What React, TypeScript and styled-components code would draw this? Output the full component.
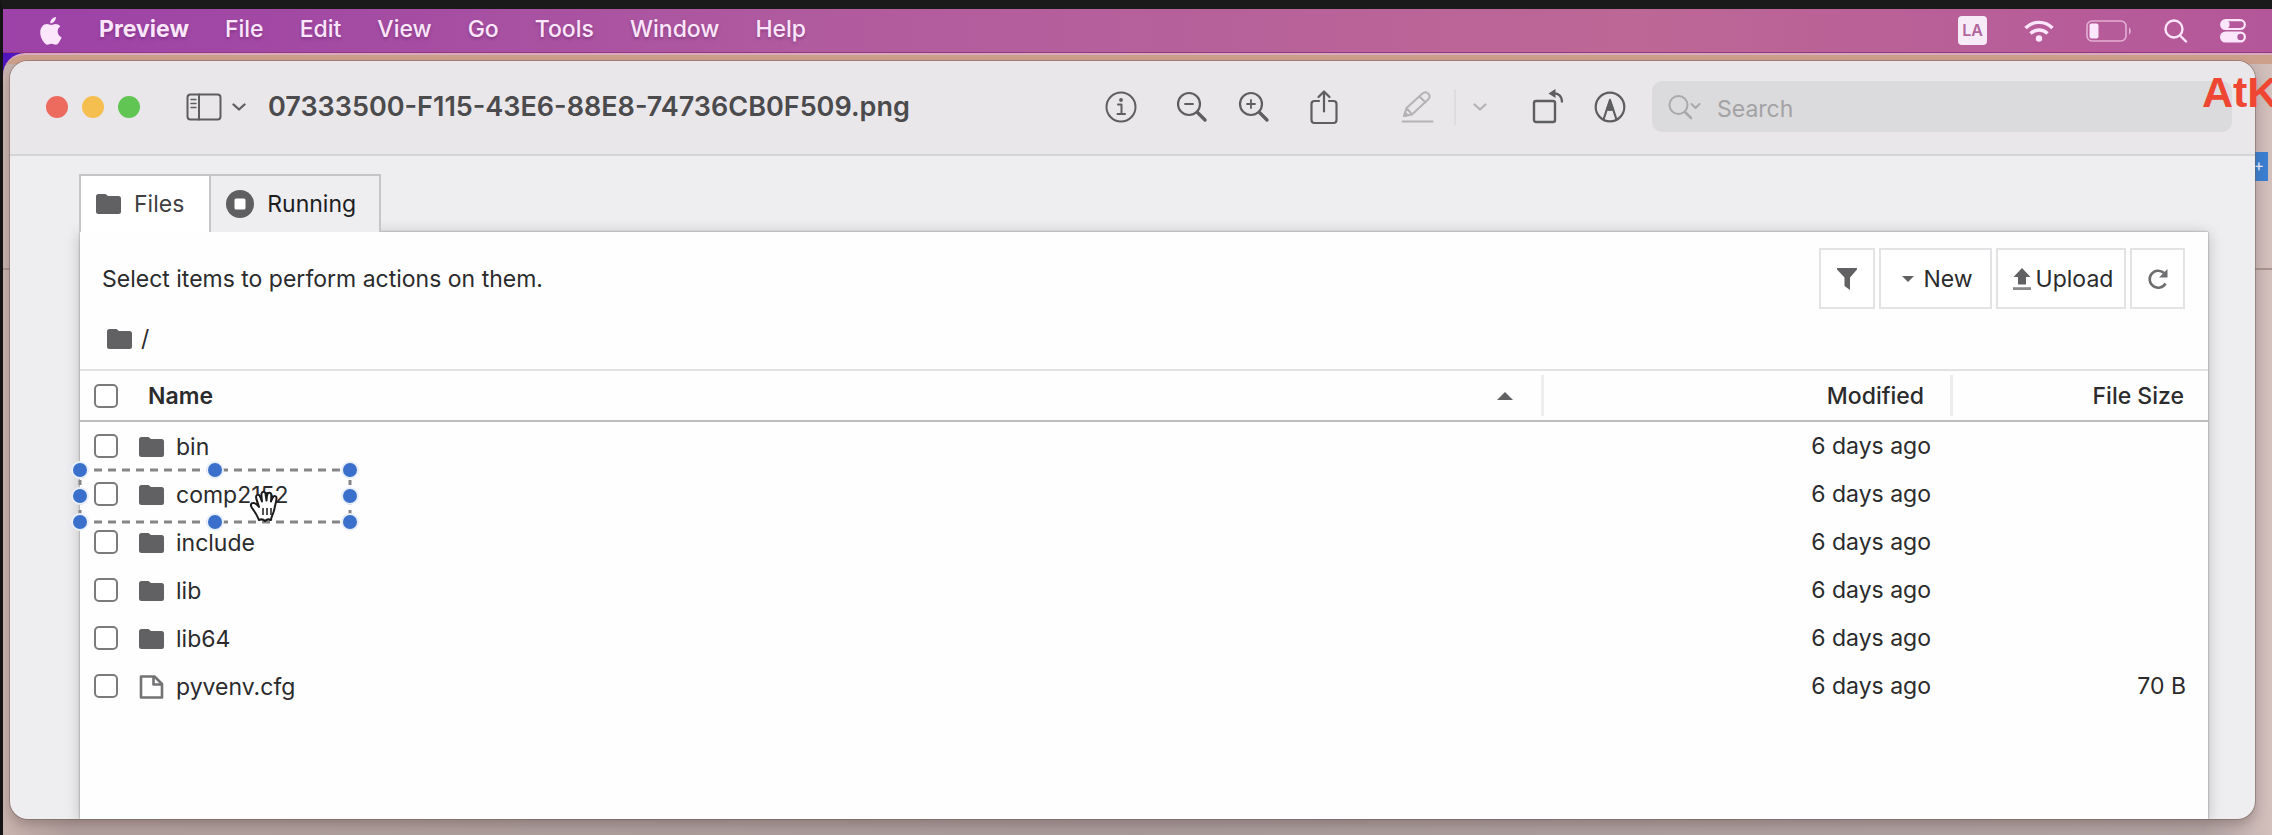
import React from "react";
import styled, { createGlobalStyle, css } from "styled-components";

const GlobalStyle = createGlobalStyle`
  *, *::before, *::after { box-sizing: border-box; }
  body {
    margin: 0;
    font-family: Inter, "Liberation Sans", sans-serif;
    font-size: 23px;
    line-height: 28px;
    color: #2b2b2d;
  }
  button, input { font: inherit; color: inherit; }
`;

const Screen = styled.div`
  min-height: 100vh;
  display: flex;
  flex-direction: column;
  border-top: 9px solid #1a1a1a;
  border-left: 3px solid #141416;
  background: linear-gradient(90deg, #4f14bd 0, #8a3a9c 400px, #b0667f 100%);
  overflow: hidden;
`;

/* ---------- menu bar ---------- */

const MenuBar = styled.header`
  height: 44px;
  display: flex;
  align-items: center;
  justify-content: space-between;
  padding: 0 26px 0 36px;
  border-bottom: 1px solid #93387f;
  background: linear-gradient(90deg, #9c42a8 0%, #a44ba3 16%, #b15b9f 36%, #bd6796 72%, #b4579a 100%);
  color: #fbe6fb;
`;

const MenuList = styled.nav`
  display: flex;
  align-items: center;
  gap: 36px;
`;

const MenuItem = styled.button<{ $strong?: boolean }>`
  border: 0;
  padding: 0 0 3px;
  background: none;
  line-height: 28px;
  font-weight: ${(p) => (p.$strong ? 700 : 500)};
  text-shadow: 0 2px 3px rgba(80, 20, 80, 0.35);
`;

const MenuIcon = styled(MenuItem)`
  display: flex;
  padding: 0;
`;

const StatusList = styled.div`
  display: flex;
  align-items: center;
  gap: 32px;
`;

const InputSource = styled.button`
  width: 29px;
  height: 29px;
  margin-right: 5px;
  border: 0;
  border-radius: 4px;
  padding: 0;
  background: #f7ebf8;
  color: #b0659c;
  font-size: 16px;
  font-weight: 600;
  line-height: 29px;
`;

/* ---------- windows ---------- */

const BackWindow = styled.div`
  position: relative;
  flex: 1;
  display: flex;
  padding: 6px 17px 16px 7px;
  border-top: 2px solid #d9a9bd;
  border-top-left-radius: 22px;
  background:
    linear-gradient(#a99491, #a99491) 0 213px / 100% 2px no-repeat,
    linear-gradient(#cda08c 0, #cda08c 9px, transparent 9px),
    linear-gradient(90deg, #c9b3ae 0, #b3a19e 3%, #aa9c9a 50%, #b3a4a2 97%, #d3c0bd 100%);
`;

const Window = styled.main`
  position: relative;
  flex: 1;
  min-width: 0;
  display: flex;
  flex-direction: column;
  border-radius: 18px;
  background: #eeeef0;
  box-shadow: 0 0 0 1px rgba(110, 90, 90, 0.45), 0 6px 12px rgba(70, 50, 50, 0.3);
  overflow: hidden;
`;

const TitleBar = styled.div`
  height: 95px;
  flex: none;
  display: flex;
  align-items: center;
  padding: 0 23px 2px 36px;
  border-bottom: 2px solid #d4d3d5;
  background: #e9e7ea;
  color: #58575a;
`;

const Lights = styled.div`
  display: flex;
  gap: 14px;
  margin-right: 46px;
`;

const Light = styled.button<{ $color: string }>`
  width: 22px;
  height: 22px;
  border: 0;
  border-radius: 50%;
  padding: 0;
  background: ${(p) => p.$color};
`;

const ToolButton = styled.button<{ $width?: number; $before?: number; $faded?: boolean }>`
  width: ${(p) => p.$width ?? 40}px;
  height: 40px;
  flex: none;
  display: flex;
  align-items: center;
  justify-content: center;
  margin-left: ${(p) => p.$before ?? 0}px;
  border: 0;
  padding: 0;
  background: none;
  color: ${(p) => (p.$faded ? "#b3b2b5" : "#5e5d60")};
`;

const Title = styled.h1`
  flex: 1;
  min-width: 0;
  margin: 0 0 0 22px;
  overflow: hidden;
  text-overflow: ellipsis;
  white-space: nowrap;
  font-size: 27px;
  font-weight: 600;
  line-height: 32px;
  color: #4b4a4d;
`;

const Divider = styled.span`
  width: 2px;
  height: 36px;
  margin-left: 16px;
  background: #dddcdf;
`;

const SearchBox = styled.label`
  width: 580px;
  height: 51px;
  display: flex;
  align-items: center;
  gap: 15px;
  margin-left: 22px;
  padding: 0 16px;
  border-radius: 10px;
  background: #dbdadc;
  color: #a9a8ab;
`;

const SearchInput = styled.input`
  flex: 1;
  min-width: 0;
  border: 0;
  padding: 4px 0 0;
  outline: 0;
  background: none;
  &::placeholder { color: #a3a2a5; opacity: 1; }
`;

const Canvas = styled.div`
  flex: 1;
  display: flex;
  flex-direction: column;
  padding: 18px 47px 0 70px;
`;

const TabList = styled.div`
  position: relative;
  z-index: 1;
  display: flex;
  margin-left: -1px;
`;

const Tab = styled.button<{ $active?: boolean }>`
  height: 58px;
  display: flex;
  align-items: center;
  gap: 13px;
  padding: 0 23px 0 15px;
  border: 2px solid #c6c6c8;
  border-bottom: 0;
  background: #eeeef0;
  color: #1d1d1f;
  ${(p) =>
    p.$active
      ? css`
          padding-right: 25px;
          border-right: 0;
          background: #fff;
          color: #404042;
        `
      : ""}
`;

const Panel = styled.section`
  flex: 1;
  background: #fefefe;
  box-shadow: 0 0 2px rgba(0, 0, 0, 0.4), 0 2px 14px rgba(0, 0, 0, 0.22);
`;

/* ---------- file browser ---------- */

const ActionBar = styled.div`
  display: flex;
  align-items: center;
  gap: 4px;
  padding: 16px 23px 0 22px;
`;

const Hint = styled.p`
  flex: 1;
  margin: 0;
`;

const ActionButton = styled.button<{ $width: number; $gap?: number }>`
  width: ${(p) => p.$width}px;
  height: 61px;
  display: flex;
  align-items: center;
  justify-content: center;
  gap: ${(p) => p.$gap ?? 0}px;
  border: 2px solid #e3e3e5;
  padding: 0 0 0 ${(p) => (p.$gap ? 4 : 0)}px;
  background: #fff;
`;

const Crumbs = styled.nav`
  height: 60px;
  display: flex;
  align-items: center;
  gap: 9px;
  padding: 0 27px;
`;

const CrumbLink = styled.a`
  display: flex;
  color: inherit;
  text-decoration: none;
`;

const FileTable = styled.table`
  width: 100%;
  table-layout: fixed;
  border-collapse: separate;
  border-spacing: 0;
`;

const CheckCol = styled.col` width: 52px; `;
const ModifiedCol = styled.col` width: 409px; `;
const SizeCol = styled.col` width: 258px; `;

const HeadCell = styled.th<{ $weight?: number }>`
  padding: 4px 0;
  border-top: 2px solid #e2e2e4;
  border-bottom: 2px solid #bdbdbf;
  text-align: left;
  font-weight: ${(p) => p.$weight ?? 500};
`;

const HeadInner = styled.div<{ $split?: boolean; $align?: string; $right?: number }>`
  height: 41px;
  display: flex;
  align-items: center;
  justify-content: ${(p) => p.$align ?? "space-between"};
  border-left: ${(p) => (p.$split ? "3px solid #ededf0" : "0")};
  padding: 0 ${(p) => p.$right ?? 0}px 0 16px;
`;

const CheckHead = styled(HeadInner)`
  padding: 0 0 0 14px;
`;

const Row = styled.tr`
  height: 48px;
`;

const Cell = styled.td<{ $right?: number }>`
  position: relative;
  padding: 0 ${(p) => p.$right ?? 0}px 0 0;
  text-align: ${(p) => (p.$right ? "right" : "left")};
`;

const CheckCell = styled(Cell)`
  padding-left: 14px;
`;

const Check = styled.input`
  appearance: none;
  display: block;
  width: 24px;
  height: 24px;
  margin: 0;
  border: 2px solid #7b7b7d;
  border-radius: 5px;
  background: #fff;
`;

const FileLink = styled.a`
  display: inline-flex;
  align-items: center;
  gap: 12px;
  padding-left: 7px;
  color: inherit;
  text-decoration: none;
  vertical-align: middle;
`;

/* ---------- overlays ---------- */

const Selection = styled.svg`
  position: absolute;
  z-index: 2;
  left: -10px;
  top: -10px;
  overflow: visible;
  pointer-events: none;
`;

const Watermark = styled.div`
  position: absolute;
  z-index: 3;
  top: 16px;
  left: calc(100% - 70px);
  color: #ee4632;
  font: 700 43px/43px "Liberation Sans", Arial, sans-serif;
`;

const AddBadge = styled.div`
  position: absolute;
  top: 97px;
  right: 4px;
  width: 20px;
  height: 29px;
  padding-right: 4px;
  background: #3a7fd2;
  color: #e9f3ff;
  font-size: 16px;
  line-height: 27px;
  text-align: right;
`;

/* ---------- icons ---------- */

const stroke = { fill: "none", stroke: "currentColor", strokeLinecap: "round", strokeLinejoin: "round" } as const;

const AppleIcon = () => (
  <svg width="24" height="28" viewBox="0 0 24 28" fill="currentColor" aria-hidden="true">
    <path d="M16.900 0c.2 3.300-2.500 6.400-5.600 6.300C11 3.300 13.800.3 16.900 0zM22.700 20.300c-.9 2.100-1.400 3-2.500 4.600-.9 1.400-2 2.800-3.600 2.800-1.500 0-2-.9-4.100-.9s-2.600.9-4.100.9c-1.600 0-2.700-1.300-3.700-2.700C.7 19.900.1 12.700 3.200 9.500c1.300-1.600 3-2.400 4.700-2.400 1.800 0 3 1 4.400 1 1.300 0 2.300-1 4.400-1 1.500 0 3.300.8 4.600 2.300-4 2.300-3.300 8.900 1.400 10.900z" />
  </svg>
);

const WifiIcon = () => (
  <svg width="30" height="22" viewBox="0 0 30 22" {...stroke} strokeWidth="3.400" strokeLinecap="butt" aria-hidden="true">
    <path d="M1.500 8a19 19 0 0 1 27 0M6.500 13.500a12 12 0 0 1 17 0" />
    <circle cx="15" cy="18.500" r="3.200" fill="currentColor" stroke="none" />
  </svg>
);

const BatteryIcon = () => (
  <svg width="46" height="22" viewBox="0 0 46 22" aria-hidden="true">
    <rect x="1" y="1" width="39" height="20" rx="5" fill="none" stroke="#e3b0d4" strokeWidth="1.600" />
    <rect x="3.500" y="3.500" width="9" height="15" rx="2" fill="currentColor" />
    <path d="M43 7.500c2.400 1.200 2.400 5.800 0 7z" fill="#e3b0d4" />
  </svg>
);

const SpotlightIcon = () => (
  <svg width="24" height="24" viewBox="0 0 24 24" {...stroke} strokeWidth="2.400" aria-hidden="true">
    <circle cx="10" cy="10" r="8.500" />
    <path d="M16 16.500l6 6" />
  </svg>
);

const ControlIcon = () => (
  <svg width="26" height="24" viewBox="0 0 26 24" aria-hidden="true">
    <rect x="1.200" y="1.200" width="23.600" height="8.800" rx="4.400" fill="none" stroke="currentColor" strokeWidth="2.200" />
    <circle cx="5.600" cy="5.600" r="4" fill="currentColor" />
    <rect x="0" y="12.500" width="26" height="11" rx="5.500" fill="currentColor" />
    <circle cx="20.500" cy="18" r="3.200" fill="#b0589c" />
  </svg>
);

const SidebarIcon = () => (
  <svg width="36" height="28" viewBox="0 0 36 28" {...stroke} strokeWidth="2" aria-hidden="true">
    <rect x="1.500" y="1.500" width="33" height="25" rx="3" />
    <path d="M13 1.500v25" />
    <path d="M5 6.500h5M5 10.500h5M5 14.500h5" strokeWidth="1.400" />
  </svg>
);

const ChevronIcon = () => (
  <svg width="14" height="10" viewBox="0 0 14 10" {...stroke} strokeWidth="2.300" aria-hidden="true">
    <path d="M1.500 2.500l5.500 5 5.500-5" />
  </svg>
);

const InfoIcon = () => (
  <svg width="32" height="32" viewBox="0 0 32 32" {...stroke} strokeWidth="2" aria-hidden="true">
    <circle cx="16" cy="16" r="14.500" />
    <path d="M13 13.500h3.500v9M12.500 23h7.500" />
    <circle cx="16" cy="9" r="1.900" fill="currentColor" stroke="none" />
  </svg>
);

const LensIcon = ({ plus }: { plus?: boolean }) => (
  <svg width="32" height="32" viewBox="0 0 32 32" {...stroke} aria-hidden="true">
    <circle cx="13" cy="13" r="11" strokeWidth="2.200" />
    <path d={plus ? "M9 13h8M13 9v8" : "M9 13h8"} strokeWidth="1.800" />
    <path d="M21.500 21.500l7.500 7.500" strokeWidth="3.400" />
  </svg>
);

const ShareIcon = () => (
  <svg width="30" height="36" viewBox="0 0 30 36" {...stroke} strokeWidth="2.200" aria-hidden="true">
    <path d="M10 12H5.500a3 3 0 0 0-3 3v16a3 3 0 0 0 3 3h19a3 3 0 0 0 3-3V15a3 3 0 0 0-3-3H20M15 22.500V2.500M9.500 8L15 2.500 20.500 8" />
  </svg>
);

const PencilIcon = () => (
  <svg width="34" height="34" viewBox="0 0 34 34" {...stroke} strokeWidth="2" aria-hidden="true">
    <path d="M3 26l2.500-8L21.500 3.500c2-1.800 4.200-1.500 5.800.2 1.600 1.800 1.800 3.800 0 5.600L11 24.500zM18.500 6.500l6 6M5.500 18l5.500 6.500" />
    <path d="M3 26l1-3.300L6.500 25z" fill="currentColor" />
    <path d="M1.500 31.500h30" />
  </svg>
);

const RotateIcon = () => (
  <svg width="34" height="36" viewBox="0 0 34 36" {...stroke} strokeWidth="2.400" aria-hidden="true">
    <rect x="3" y="12" width="21" height="21" rx="2" />
    <path d="M22 4.500c5.500-.5 9 2.500 9 9" strokeWidth="2.200" strokeLinecap="butt" />
    <path d="M24.500 0v9l-7-4.500z" fill="currentColor" stroke="none" />
  </svg>
);

const MarkupIcon = () => (
  <svg width="32" height="32" viewBox="0 0 32 32" {...stroke} strokeWidth="2.200" aria-hidden="true">
    <circle cx="16" cy="16" r="14.300" />
    <path d="M9.500 28.500L16 9l6.500 19.500" />
    <path d="M16 7.500l4.300 11.500c-2.700 1.200-5.900 1.200-8.600 0z" fill="currentColor" stroke="none" />
  </svg>
);

const SearchMenuIcon = () => (
  <svg width="34" height="26" viewBox="0 0 34 26" {...stroke} strokeWidth="2" aria-hidden="true">
    <circle cx="10.500" cy="11" r="9" />
    <path d="M17 18l6 6" strokeWidth="2.600" />
    <path d="M23.500 10l4 4 4-4" />
  </svg>
);

const FolderIcon = () => (
  <svg width="25" height="20" viewBox="0 0 25 20" fill="#616163" aria-hidden="true">
    <path d="M2.500 0h7l2.500 2H22.500a2.500 2.500 0 0 1 2.500 2.500v13a2.500 2.500 0 0 1-2.500 2.500h-20a2.500 2.500 0 0 1-2.500-2.500v-15a2.500 2.500 0 0 1 2.500-2.500z" />
  </svg>
);

const FileIcon = () => (
  <svg width="25" height="24" viewBox="0 0 25 24" fill="none" stroke="#737375" strokeWidth="2.600" strokeLinejoin="round" aria-hidden="true">
    <path d="M2 1.500h13.500L23 9v13.500H2zM14.500 2v7.500H23" />
  </svg>
);

const StopIcon = () => (
  <svg width="28" height="28" viewBox="0 0 28 28" aria-hidden="true">
    <circle cx="14" cy="14" r="14" fill="#5f5f61" />
    <rect x="8.500" y="8.500" width="11" height="11" rx="1.500" fill="#fff" />
  </svg>
);

const FilterIcon = () => (
  <svg width="20" height="22" viewBox="0 0 20 22" fill="#616163" aria-hidden="true">
    <path d="M0 0h20v1.500l-7 8v12.500L7.500 18V9.500L0 1.500z" />
  </svg>
);

const CaretIcon = ({ up }: { up?: boolean }) => (
  <svg width={up ? 16 : 12} height={up ? 8 : 6} viewBox="0 0 16 8" fill="#616163" aria-hidden="true">
    <path d={up ? "M8 0l8 8H0z" : "M0 0h16L8 8z"} />
  </svg>
);

const UploadIcon = () => (
  <svg width="18" height="22" viewBox="0 0 18 22" fill="#616163" aria-hidden="true">
    <path d="M9 0l8.500 9H13v7.500H5V9H.5z" />
    <path d="M0 19.200h18V22H0z" fill="#8a8a8c" />
  </svg>
);

const RefreshIcon = () => (
  <svg width="22" height="22" viewBox="0 0 22 22" fill="none" stroke="#6e6e70" strokeWidth="2.600" aria-hidden="true">
    <path d="M18.500 15.500a8.500 8.500 0 1 1-1.500-10.500" />
    <path d="M20.500 1v8.500H12z" fill="#6e6e70" stroke="none" />
  </svg>
);

const SelectionOverlay = () => (
  <Selection width="290" height="72" viewBox="0 0 290 72" aria-hidden="true">
    <g fill="none" stroke="#858587" strokeWidth="3" strokeDasharray="8 6">
      <path d="M10 10h270M10 62h270" />
      <path d="M10 10v52M280 10v52" strokeDasharray="5 5" />
    </g>
    {[10, 145, 280].flatMap((x) =>
      [10, 36, 62]
        .filter((y) => !(x === 145 && y === 36))
        .map((y) => <circle key={`${x}-${y}`} cx={x} cy={y} r="8" fill="#3a70cb" stroke="#e9effc" strokeWidth="2" />)
    )}
    <g transform="translate(0 4)">
      <path
        d="M189 56c-2-5-4-8-7-12-2-3-1-5 1-5 2-.5 4 1.500 6 4-1-4-3-8-3-10 0-2.500 3-3 4-.5l2 5c-.3-3-.8-6-.5-8 .5-2.500 3.500-2.500 4 0l1 7c.2-3 .4-5 1-6.500 1-2 3.500-1.500 3.700.5.200 3 0 5-.2 7 .8-2 1.500-4 2.500-5 1.500-1 3.200 0 3 2-.3 4-1.500 7-2 10-.4 4-3 7-3.500 11.500-2-1-4-1-6 1-2-2-4-2-6-1z"
        fill="#fff"
        stroke="#1b1b1d"
        strokeWidth="2"
        strokeLinejoin="round"
      />
      <path d="M193 44v7M197 44v7M201 44v7" stroke="#1b1b1d" strokeWidth="1.500" />
    </g>
  </Selection>
);

/* ---------- data ---------- */

const menus = ["File", "Edit", "View", "Go", "Tools", "Window", "Help"];

const files = [
  { name: "bin", folder: true, size: "" },
  { name: "comp2152", folder: true, size: "", selected: true },
  { name: "include", folder: true, size: "" },
  { name: "lib", folder: true, size: "" },
  { name: "lib64", folder: true, size: "" },
  { name: "pyvenv.cfg", folder: false, size: "70 B" },
];

export default function App() {
  return (
    <Screen>
      <GlobalStyle />
      <MenuBar>
        <MenuList aria-label="Menu bar">
          <MenuIcon aria-label="Apple menu"><AppleIcon /></MenuIcon>
          <MenuItem $strong>Preview</MenuItem>
          {menus.map((m) => <MenuItem key={m}>{m}</MenuItem>)}
        </MenuList>
        <StatusList>
          <InputSource aria-label="Input source LA">LA</InputSource>
          <MenuIcon aria-label="Wi-Fi"><WifiIcon /></MenuIcon>
          <MenuIcon aria-label="Battery"><BatteryIcon /></MenuIcon>
          <MenuIcon aria-label="Spotlight"><SpotlightIcon /></MenuIcon>
          <MenuIcon aria-label="Control Center"><ControlIcon /></MenuIcon>
        </StatusList>
      </MenuBar>

      <BackWindow>
        <AddBadge>+</AddBadge>
        <Window>
          <TitleBar>
            <Lights>
              <Light $color="#ed6a5f" aria-label="Close" />
              <Light $color="#f5bf4f" aria-label="Minimize" />
              <Light $color="#61c554" aria-label="Zoom window" />
            </Lights>
            <ToolButton $width={36} aria-label="Sidebar"><SidebarIcon /></ToolButton>
            <ToolButton $width={14} $before={10} aria-label="Sidebar options"><ChevronIcon /></ToolButton>
            <Title>07333500-F115-43E6-88E8-74736CB0F509.png</Title>
            <ToolButton aria-label="Info"><InfoIcon /></ToolButton>
            <ToolButton $before={31} aria-label="Zoom out"><LensIcon /></ToolButton>
            <ToolButton $before={22} aria-label="Zoom in"><LensIcon plus /></ToolButton>
            <ToolButton $before={30} aria-label="Share"><ShareIcon /></ToolButton>
            <ToolButton $before={54} $faded aria-label="Highlight"><PencilIcon /></ToolButton>
            <Divider />
            <ToolButton $width={24} $before={12} $faded aria-label="Highlight options"><ChevronIcon /></ToolButton>
            <ToolButton $before={36} aria-label="Rotate"><RotateIcon /></ToolButton>
            <ToolButton $before={22} aria-label="Markup"><MarkupIcon /></ToolButton>
            <SearchBox>
              <SearchMenuIcon />
              <SearchInput type="text" placeholder="Search" aria-label="Search" />
            </SearchBox>
          </TitleBar>

          <Canvas>
            <TabList role="tablist">
              <Tab $active role="tab" aria-selected="true"><FolderIcon />Files</Tab>
              <Tab role="tab" aria-selected="false"><StopIcon />Running</Tab>
            </TabList>
            <Panel>
              <ActionBar>
                <Hint>Select items to perform actions on them.</Hint>
                <ActionButton $width={56} aria-label="Filter"><FilterIcon /></ActionButton>
                <ActionButton $width={113} $gap={9}><CaretIcon />New</ActionButton>
                <ActionButton $width={130} $gap={5}><UploadIcon />Upload</ActionButton>
                <ActionButton $width={55} aria-label="Refresh"><RefreshIcon /></ActionButton>
              </ActionBar>
              <Crumbs aria-label="Breadcrumb">
                <CrumbLink href="#root" aria-label="Root folder"><FolderIcon /></CrumbLink>
                <span>/</span>
              </Crumbs>
              <FileTable>
                <colgroup><CheckCol /><col /><ModifiedCol /><SizeCol /></colgroup>
                <thead>
                  <tr>
                    <HeadCell><CheckHead><Check type="checkbox" aria-label="Select all" /></CheckHead></HeadCell>
                    <HeadCell $weight={600}><HeadInner $right={28}>Name<CaretIcon up /></HeadInner></HeadCell>
                    <HeadCell><HeadInner $split $align="flex-end" $right={26}>Modified</HeadInner></HeadCell>
                    <HeadCell><HeadInner $split $align="flex-end" $right={24}>File Size</HeadInner></HeadCell>
                  </tr>
                </thead>
                <tbody>
                  {files.map((f) => (
                    <Row key={f.name}>
                      <CheckCell>
                        <Check type="checkbox" aria-label={`Select ${f.name}`} />
                        {f.selected && <SelectionOverlay />}
                      </CheckCell>
                      <Cell>
                        <FileLink href={`#${f.name}`}>{f.folder ? <FolderIcon /> : <FileIcon />}{f.name}</FileLink>
                      </Cell>
                      <Cell $right={19}>6 days ago</Cell>
                      <Cell $right={22}>{f.size}</Cell>
                    </Row>
                  ))}
                </tbody>
              </FileTable>
            </Panel>
          </Canvas>
        </Window>
        <Watermark>AtK</Watermark>
      </BackWindow>
    </Screen>
  );
}
